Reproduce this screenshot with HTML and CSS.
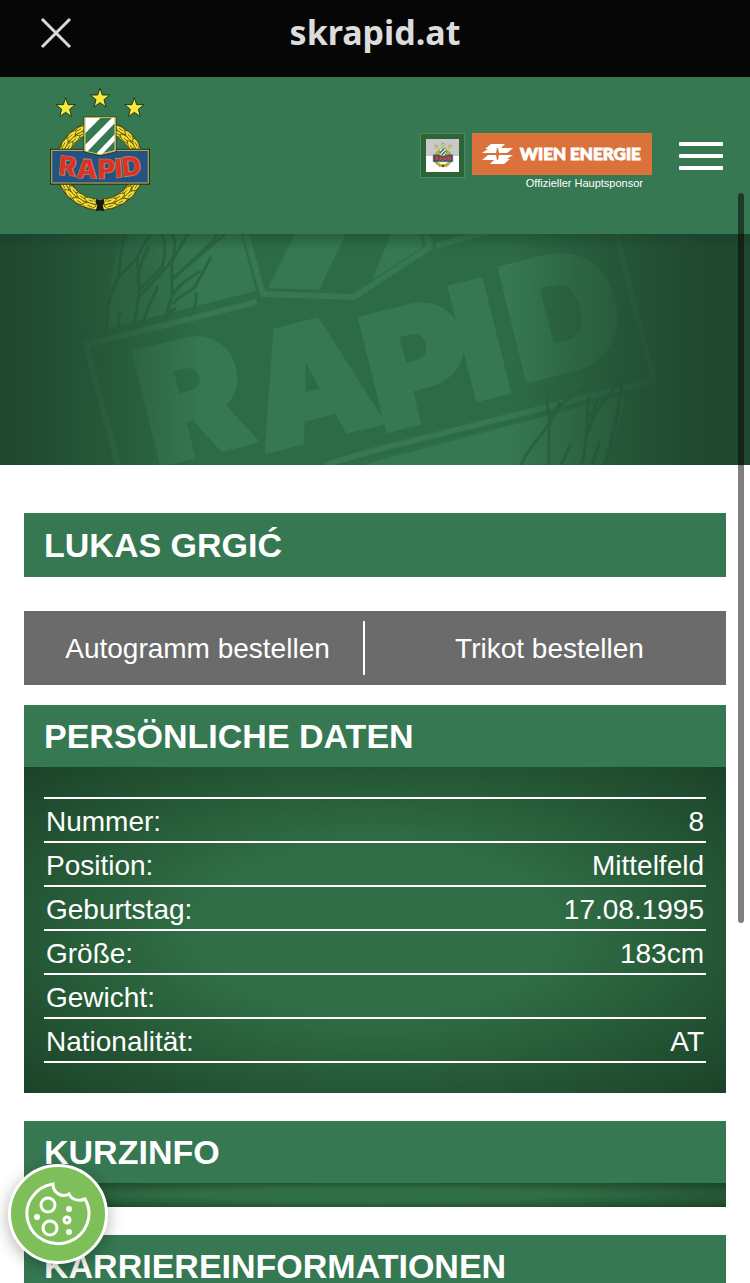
FILE: index.html
```html
<!DOCTYPE html>
<html lang="de">
<head>
    <meta charset="UTF-8">
    <title>Lukas Grgić - SK Rapid</title>
    <meta name="viewport" content="width=device-width, initial-scale=1.0">
    <link rel="stylesheet" href="styles.css">
</head>
<body>
    <div class="browser-bar">
        <button class="close-btn" type="button" aria-label="Schließen">
            <svg viewBox="0 0 32 32" width="32" height="32"><path d="M2 2 30 30M30 2 2 30"/></svg>
        </button>
        <div class="browser-url">skrapid.at</div>
    </div>

    <header class="site-header">
        <a class="logo" href="#" aria-label="SK Rapid">
            <svg viewBox="30 21 300 375" width="100" height="125">
                <defs>
                    <path id="star" d="M0-30 7-9 29-9 12 5 18 27 0 14-18 27-12 5-29-9-7-9Z"/>
                    <g id="leaf">
                        <path d="M-2 20C-19 10-18-8-8-23 2-12 4 5-2 20Z"/>
                        <path d="M2 20C19 12 19-6 11-21 0-12-1 4 2 20Z"/>
                        <path d="M-8 8-8-6M8 8 9-6"/>
                    </g>
                    <g id="crest">
                        <g fill="#f7ea3c" stroke="#24351d" stroke-width="3">
                            <use href="#star" x="180" y="54"/>
                            <use href="#star" x="77" y="83"/>
                            <use href="#star" x="283" y="83"/>
                        </g>
                        <circle cx="180" cy="257" r="117" fill="none" stroke="#40380d" stroke-width="34"/>
                        <circle cx="180" cy="257" r="117" fill="none" stroke="#f3df35" stroke-width="30"/>
                        <g fill="#f3df35" stroke="#40380d" stroke-width="2">
                            <use href="#leaf" transform="translate(122 156) rotate(60)"/>
                            <use href="#leaf" transform="translate(98 173) rotate(45)"/>
                            <use href="#leaf" transform="translate(79 197) rotate(30)"/>
                            <use href="#leaf" transform="translate(67 224) rotate(15)"/>
                            <use href="#leaf" transform="translate(238 156) rotate(-60)"/>
                            <use href="#leaf" transform="translate(262 173) rotate(-45)"/>
                            <use href="#leaf" transform="translate(281 197) rotate(-30)"/>
                            <use href="#leaf" transform="translate(293 224) rotate(-15)"/>
                            <use href="#leaf" transform="translate(78 314) rotate(-30)"/>
                            <use href="#leaf" transform="translate(96 339) rotate(-45)"/>
                            <use href="#leaf" transform="translate(121 358) rotate(-60)"/>
                            <use href="#leaf" transform="translate(150 370) rotate(-75)"/>
                            <use href="#leaf" transform="translate(282 314) rotate(30)"/>
                            <use href="#leaf" transform="translate(264 339) rotate(45)"/>
                            <use href="#leaf" transform="translate(239 358) rotate(60)"/>
                            <use href="#leaf" transform="translate(210 370) rotate(75)"/>
                        </g>
                        <path d="M168 357 180 361 192 357V370L188 376 193 394 180 391 167 394 172 376 168 370Z" fill="#141812"/>
                        <path d="M33 209H327V311H33Z" fill="#245383" stroke="#24351d" stroke-width="6"/>
                        <path d="M35 211H325V309H35Z" fill="none" stroke="#c9b75a" stroke-width="3"/>
                        <path d="M133 111H227V214L180 226 133 214Z" fill="#fff" stroke="#24351d" stroke-width="5"/>
                        <path d="M136 160 182 113H216L136 194ZM143 214 224 130V163L168 221ZM190 219 224 183V211Z" fill="#357851"/>
                        <path d="M134 112H226V213L180 224 134 213Z" fill="none" stroke="#d6c757" stroke-width="3"/>
                        <text class="crest-text" x="54 108 173 226 248" y="284 294 297 294 290" rotate="5 2 0 -4 -6">RAPID</text>
                    </g>
                </defs>
                <use href="#crest"/>
            </svg>
        </a>

        <div class="header-right">
            <a class="sponsor" href="#">
                <span class="club-badge">
                    <svg viewBox="20 0 320 420" width="28" height="28"><use href="#crest"/></svg>
                </span>
                <span class="sponsor-main">
                    <span class="sponsor-box">
                        <svg viewBox="0 0 33 22" width="33" height="22">
                            <path d="M10 1H24L20 5H32L26 10H18L17 5H16L15 10H1L7 6H4Z"/>
                            <path d="M23 21H9L13 17H1L7 12H15L16 17H17L18 12H32L26 16H29Z"/>
                        </svg>
                        <span>WIEN ENERGIE</span>
                    </span>
                    <span class="sponsor-note">Offizieller Hauptsponsor</span>
                </span>
            </a>
            <button class="menu-btn" type="button" aria-label="Menü">
                <span></span>
                <span></span>
                <span></span>
            </button>
        </div>
    </header>

    <div class="hero">
        <svg viewBox="0 0 750 231" preserveAspectRatio="xMidYMid slice" aria-hidden="true">
            <!-- area behind the wreath -->
            <path class="hero-light" d="M124 0H241L256 57 107 101C107 65 111 28 124 0Z"/>
            <!-- name plate -->
            <path class="hero-dark" d="M78 102 256 57 242 0H622L662 154 340 231H111Z"/>
            <path class="hero-light" d="M362 231 625 161C622 190 612 212 602 231Z"/>
            <path class="hero-frame" d="M118 231 86 111 257 68M616 0 654 146 372 217 325 231"/>
            <!-- shield -->
            <path class="hero-frame" d="M246 0 263 60 354 63 430 13 426 0M436 12 492 -4"/>
            <path class="hero-light" d="M295 0H346L319 56 268 54ZM391 0H419L423 13 372 46Z"/>
            <!-- wreath leaves -->
            <path class="hero-leaf" d="M126 0C118 20 121 32 118 44C108 62 106 80 107 100M118 44 137 24C141 50 138 75 133 95M119 94C118 84 119 80 121 78M137 24C142 12 147 5 151 0M137 50C139 30 145 20 149 12M162 0C166 10 166 20 162 33L139 56M142 92C147 74 153 64 158 52M172 0C177 9 174 18 172 27L139 63M172 27 188 0M172 27 172 62 164 88M172 46 212 8 217 0M172 62C181 47 190 45 200 37M173 70C181 58 190 61 196 51L211 23M166 87C168 78 172 76 176 74M196 58C197 68 194 76 190 82M178 40 225 0"/>
            <path class="hero-leaf" d="M521 231C530 210 540 205 549 190C549 178 545 166 549 156M549 231V194C554 171 571 162 588 154M550 185 560 168M561 231 571 210M581 231C588 211 586 187 589 161M588 199C593 180 602 167 622 144C620 181 610 209 605 231M590 184 597 168M592 231 600 207"/>
            <text class="hero-text" x="155 264 381 471 521" y="232 218 198 167 148" rotate="-14">RAPID</text>
        </svg>
    </div>

    <main class="content">
        <h1 class="bar player-name">LUKAS GRGIĆ</h1>

        <nav class="order-links">
            <a href="#">Autogramm bestellen</a>
            <a href="#">Trikot bestellen</a>
        </nav>

        <section class="box">
            <h2 class="bar">PERSÖNLICHE DATEN</h2>
            <div class="panel">
                <table class="data-table">
                    <tr><th scope="row">Nummer:</th><td>8</td></tr>
                    <tr><th scope="row">Position:</th><td>Mittelfeld</td></tr>
                    <tr><th scope="row">Geburtstag:</th><td>17.08.1995</td></tr>
                    <tr><th scope="row">Größe:</th><td>183cm</td></tr>
                    <tr><th scope="row">Gewicht:</th><td></td></tr>
                    <tr><th scope="row">Nationalität:</th><td>AT</td></tr>
                </table>
            </div>
        </section>

        <section class="box">
            <h2 class="bar">KURZINFO</h2>
            <div class="panel panel-empty"></div>
        </section>

        <section class="box">
            <h2 class="bar">KARRIEREINFORMATIONEN</h2>
        </section>
    </main>

    <button class="cookie-btn" type="button" aria-label="Cookie-Einstellungen">
        <svg viewBox="0 0 66 64" width="66" height="64">
            <path d="M28 2A31 30 0 1 0 60 17C55 19 47 19 44 12 37 16 28 11 28 2Z"/>
            <circle cx="23" cy="23" r="7"/>
            <circle cx="25" cy="46" r="7"/>
            <circle cx="42" cy="38" r="3"/>
            <g class="dots">
                <circle cx="12" cy="35" r="3"/>
                <circle cx="44" cy="27" r="3"/>
                <circle cx="44" cy="50" r="3"/>
            </g>
        </svg>
    </button>
    <div class="scroll-thumb"></div>
</body>
</html>
```
FILE: styles.css
```css
* {
    box-sizing: border-box;
}
body {
    margin: 0;
    background-color: #fff;
    font-family: "Liberation Sans", Arial, sans-serif;
    color: #fff;
}
a {
    color: inherit;
    text-decoration: none;
}
button {
    padding: 0;
    border: none;
    background: none;
    cursor: pointer;
}
svg {
    display: block;
}

/* browser bar */
.browser-bar {
    display: grid;
    grid-template-columns: 32px 1fr 32px;
    align-items: center;
    padding: 8px 40px 20px;
    background-color: #060606;
}
.close-btn path {
    fill: none;
    stroke: #dcdcdc;
    stroke-width: 3;
}
.browser-url {
    font-family: "Noto Sans", sans-serif;
    font-size: 34px;
    font-weight: 700;
    line-height: 49px;
    text-align: center;
    color: #dcdcdc;
}

/* header */
.site-header {
    display: flex;
    align-items: center;
    justify-content: space-between;
    padding: 10px 27px 22px 50px;
    background-color: #357851;
}
.crest-text {
    font-family: Inter, sans-serif;
    font-size: 80px;
    font-weight: 900;
    fill: #dc3029;
    stroke: #b89a55;
    stroke-width: 2;
}
.header-right {
    display: flex;
    align-items: center;
    gap: 27px;
    padding-top: 12px;
}
.sponsor {
    display: flex;
    gap: 7px;
    padding-top: 12px;
}
.club-badge {
    display: flex;
    align-items: center;
    justify-content: center;
    width: 45px;
    height: 45px;
    border: 6px solid #2c6337;
    outline: 1px solid #4b8b5b;
    outline-offset: -1px;
    background: linear-gradient(#c9c9c9 50%, #fff 50%);
}
.sponsor-main {
    display: flex;
    flex-direction: column;
}
.sponsor-box {
    display: flex;
    align-items: center;
    gap: 6px;
    width: 180px;
    height: 42px;
    padding-left: 9px;
    background-color: #db713b;
    font-family: Lato, sans-serif;
    font-size: 17px;
    font-weight: 900;
    white-space: nowrap;
    -webkit-text-stroke: 1px #fff;
}
.sponsor-box path {
    fill: #fff;
}
.sponsor-note {
    padding-right: 9px;
    font-size: 11px;
    line-height: 16px;
    text-align: right;
}
.menu-btn {
    display: flex;
    flex-direction: column;
    gap: 8px;
    width: 44px;
}
.menu-btn span {
    height: 4px;
    border-radius: 1px;
    background-color: #fff;
}

/* hero */
.hero {
    position: relative;
    height: 231px;
    overflow: hidden;
    background-color: #2f6d46;
}
.hero svg {
    width: 100%;
    height: 100%;
}
.hero::after {
    content: "";
    position: absolute;
    inset: 0;
    background:
        linear-gradient(rgba(20, 60, 40, 0.4), transparent 16px),
        linear-gradient(90deg, #20482f 2%, rgba(32, 72, 47, 0.55) 14%, transparent 27%, transparent 68%, rgba(32, 72, 47, 0.6) 82%, #20482f 94%);
}
.hero-dark {
    fill: #2d6b46;
}
.hero-light,
.hero-text {
    fill: #357851;
}
.hero-frame {
    fill: none;
    stroke: #357851;
    stroke-width: 6;
}
.hero-leaf {
    fill: none;
    stroke: #2b6642;
    stroke-width: 3;
}
.hero-text {
    font-family: Inter, sans-serif;
    font-size: 158px;
    font-weight: 900;
    stroke: #357851;
    stroke-width: 5;
}

/* content */
.content {
    padding: 48px 24px 0;
}
.bar {
    margin: 0;
    padding: 0 20px;
    background-color: #357851;
    font-size: 34px;
    font-weight: 700;
    line-height: 62px;
}
.player-name {
    margin-bottom: 34px;
    line-height: 64px;
}
.order-links {
    display: grid;
    grid-template-columns: 339px 1fr;
    margin-bottom: 20px;
    padding: 10px 0;
    background-color: #6b6b6b;
    font-size: 28px;
    line-height: 56px;
    text-align: center;
}
.order-links a {
    height: 54px;
    padding-left: 8px;
}
.order-links a + a {
    border-left: 2px solid #fff;
}
.box {
    margin-bottom: 28px;
}
.panel {
    padding: 30px 20px;
    background: radial-gradient(ellipse at center, #306f45 0%, #306f45 35%, #1b4228 100%);
}
.panel-empty {
    padding: 12px 20px;
}
.data-table {
    width: 100%;
    border-collapse: collapse;
    font-size: 28px;
    line-height: 32px;
}
.data-table tr {
    border-top: 2px solid #fff;
    border-bottom: 2px solid #fff;
}
.data-table th,
.data-table td {
    height: 44px;
    padding: 7px 2px 3px;
    font-weight: 400;
    text-align: left;
}
.data-table td {
    text-align: right;
}

/* overlays */
.cookie-btn {
    position: fixed;
    left: 8px;
    bottom: 19px;
    display: flex;
    align-items: center;
    justify-content: center;
    width: 100px;
    height: 100px;
    border: 3px solid #fff;
    border-radius: 50%;
    background-color: #7fbf5a;
    box-shadow: 0 4px 16px rgba(0, 0, 0, 0.3);
}
.cookie-btn svg {
    fill: none;
    stroke: #fff;
    stroke-width: 3;
}
.cookie-btn .dots {
    fill: #fff;
    stroke: none;
}
.scroll-thumb {
    position: fixed;
    top: 193px;
    right: 6px;
    bottom: 360px;
    width: 6px;
    border-radius: 3px;
    background-color: rgba(0, 0, 0, 0.5);
}
```
